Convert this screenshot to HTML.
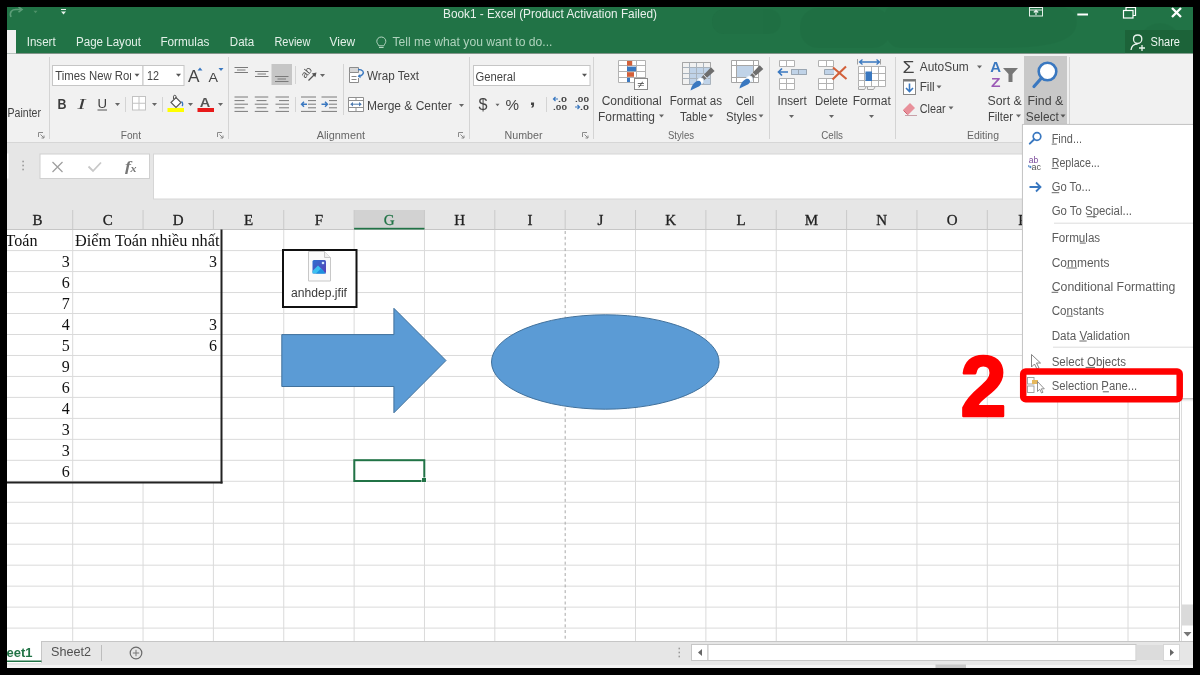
<!DOCTYPE html>
<html><head><meta charset="utf-8"><style>
html,body{margin:0;padding:0;background:#000;width:1200px;height:675px;overflow:hidden}
svg{display:block;will-change:transform}
text{white-space:pre}
</style></head><body>
<svg width="1200" height="675" viewBox="0 0 1200 675" shape-rendering="auto">
<rect x="0" y="0" width="1200" height="675" fill="#000" />
<rect x="7" y="7" width="1186" height="46.5" fill="#217346" />
<g fill="#0a3a1e" opacity="0.05"><rect x="712" y="9" width="69" height="25" rx="12"/><rect x="800" y="8" width="91" height="40" rx="18"/><path d="M890,7 L1060,7 C1075,7 1080,20 1075,30 C1068,44 1040,48 1000,48 L900,48 C880,48 880,7 890,7 Z"/><circle cx="1160" cy="45" r="22"/></g>
<rect x="7" y="30" width="9" height="23.5" fill="#f1f1f1" />
<rect x="1125" y="30" width="68" height="23.5" fill="#1c6339" />
<rect x="7" y="53.5" width="1186" height="88.5" fill="#f1f1f1" />
<rect x="7" y="142" width="1186" height="1" fill="#d6d6d6" />
<rect x="7" y="143" width="1186" height="86.5" fill="#e6e6e6" />
<rect x="7" y="229.5" width="1173" height="411.5" fill="#ffffff" />
<rect x="1180" y="229.5" width="13" height="411.5" fill="#ffffff" />
<rect x="7" y="641" width="1186" height="24" fill="#e6e6e6" />
<rect x="7" y="665" width="1186" height="3" fill="#f3f3f3" />
<path d="M11,17 C9,12 12,9 17,9.5 L21,9.5" fill="none" stroke="#5c9e78" stroke-width="1.6" />
<path d="M18.5,7 L22,9.6 L18.5,12.2" fill="none" stroke="#5c9e78" stroke-width="1.6" />
<path d="M33.5,10.75 L37.5,10.75 L35.5,13.25 Z" fill="#4f9169" stroke="none" stroke-width="1" />
<rect x="61" y="9" width="5" height="1" fill="#e8f2ec" />
<path d="M61,11.5 L66,11.5 L63.5,14.5 Z" fill="#e8f2ec" stroke="none" stroke-width="1" />
<text x="443" y="17.7" font-family="'Liberation Sans', sans-serif" font-size="12" fill="#e9f1ec" font-weight="normal" font-style="normal" text-anchor="start" textLength="214" lengthAdjust="spacingAndGlyphs" >Book1 - Excel (Product Activation Failed)</text>
<text x="26.7" y="45.8" font-family="'Liberation Sans', sans-serif" font-size="12" fill="#e3f0e8" font-weight="normal" font-style="normal" text-anchor="start" textLength="29" lengthAdjust="spacingAndGlyphs" >Insert</text>
<text x="76" y="45.8" font-family="'Liberation Sans', sans-serif" font-size="12" fill="#e3f0e8" font-weight="normal" font-style="normal" text-anchor="start" textLength="65" lengthAdjust="spacingAndGlyphs" >Page Layout</text>
<text x="160.4" y="45.8" font-family="'Liberation Sans', sans-serif" font-size="12" fill="#e3f0e8" font-weight="normal" font-style="normal" text-anchor="start" textLength="49" lengthAdjust="spacingAndGlyphs" >Formulas</text>
<text x="229.8" y="45.8" font-family="'Liberation Sans', sans-serif" font-size="12" fill="#e3f0e8" font-weight="normal" font-style="normal" text-anchor="start" textLength="24.4" lengthAdjust="spacingAndGlyphs" >Data</text>
<text x="274.4" y="45.8" font-family="'Liberation Sans', sans-serif" font-size="12" fill="#e3f0e8" font-weight="normal" font-style="normal" text-anchor="start" textLength="36" lengthAdjust="spacingAndGlyphs" >Review</text>
<text x="329.6" y="45.8" font-family="'Liberation Sans', sans-serif" font-size="12" fill="#e3f0e8" font-weight="normal" font-style="normal" text-anchor="start" textLength="25.6" lengthAdjust="spacingAndGlyphs" >View</text>
<path d="M381.3,37 C378.3,37 376.8,39.3 376.8,41.3 C376.8,43.3 378.3,44.3 378.8,45.8 L383.8,45.8 C384.3,44.3 385.8,43.3 385.8,41.3 C385.8,39.3 384.3,37 381.3,37 Z" fill="none" stroke="#b5d6c2" stroke-width="1" />
<line x1="379" y1="47.5" x2="383.6" y2="47.5" stroke="#b5d6c2" stroke-width="1" />
<text x="392.5" y="45.5" font-family="'Liberation Sans', sans-serif" font-size="12" fill="#afd3bd" font-weight="normal" font-style="normal" text-anchor="start" textLength="160" lengthAdjust="spacingAndGlyphs" >Tell me what you want to do...</text>
<rect x="1029.5" y="7.5" width="13.0" height="8.5" fill="none" stroke="#e6f0ea" stroke-width="1" />
<line x1="1029.5" y1="10" x2="1042.5" y2="10" stroke="#e6f0ea" stroke-width="1" />
<path d="M1036,15 L1036,10.5 M1033.8,12.5 L1036,10.3 L1038.2,12.5" fill="none" stroke="#e6f0ea" stroke-width="1.2" />
<rect x="1077.3" y="13.5" width="10.7" height="2.0" fill="#ffffff" />
<rect x="1123.5" y="10.5" width="9.5" height="7.5" fill="none" stroke="#ffffff" stroke-width="1.2" />
<path d="M1126,10.5 L1126,7.5 L1135.5,7.5 L1135.5,15.5 L1133,15.5" fill="none" stroke="#ffffff" stroke-width="1.2" />
<path d="M1172,8 L1181,17 M1181,8 L1172,17" fill="none" stroke="#ffffff" stroke-width="2.3" />
<path d="M1137.5,44 C1134,44 1131.5,46.5 1131,50 M1137.5,43.5 C1140.2,43.5 1141.8,41.3 1141.8,39 C1141.8,36.6 1140,35 1137.7,35 C1135.3,35 1133.5,36.6 1133.5,39 C1133.5,41.3 1135.2,43.5 1137.5,43.5 Z" fill="none" stroke="#e9f3ec" stroke-width="1.3" />
<path d="M1142,45 L1142,51 M1139,48 L1145,48" fill="none" stroke="#e9f3ec" stroke-width="1.3" />
<text x="1150.6" y="46" font-family="'Liberation Sans', sans-serif" font-size="12" fill="#eef6f1" font-weight="normal" font-style="normal" text-anchor="start" textLength="29.4" lengthAdjust="spacingAndGlyphs" >Share</text>
<line x1="49.5" y1="57" x2="49.5" y2="139" stroke="#d4d4d4" stroke-width="1" />
<line x1="228.5" y1="57" x2="228.5" y2="139" stroke="#d4d4d4" stroke-width="1" />
<line x1="469.5" y1="57" x2="469.5" y2="139" stroke="#d4d4d4" stroke-width="1" />
<line x1="593.5" y1="57" x2="593.5" y2="139" stroke="#d4d4d4" stroke-width="1" />
<line x1="769.5" y1="57" x2="769.5" y2="139" stroke="#d4d4d4" stroke-width="1" />
<line x1="895.5" y1="57" x2="895.5" y2="139" stroke="#d4d4d4" stroke-width="1" />
<line x1="1069.5" y1="57" x2="1069.5" y2="139" stroke="#d4d4d4" stroke-width="1" />
<text x="120.8" y="138.8" font-family="'Liberation Sans', sans-serif" font-size="11" fill="#666666" font-weight="normal" font-style="normal" text-anchor="start" textLength="20.2" lengthAdjust="spacingAndGlyphs" >Font</text>
<text x="316.7" y="138.8" font-family="'Liberation Sans', sans-serif" font-size="11" fill="#666666" font-weight="normal" font-style="normal" text-anchor="start" textLength="48.3" lengthAdjust="spacingAndGlyphs" >Alignment</text>
<text x="504.5" y="138.8" font-family="'Liberation Sans', sans-serif" font-size="11" fill="#666666" font-weight="normal" font-style="normal" text-anchor="start" textLength="38" lengthAdjust="spacingAndGlyphs" >Number</text>
<text x="668" y="138.8" font-family="'Liberation Sans', sans-serif" font-size="11" fill="#666666" font-weight="normal" font-style="normal" text-anchor="start" textLength="26" lengthAdjust="spacingAndGlyphs" >Styles</text>
<text x="821.3" y="138.8" font-family="'Liberation Sans', sans-serif" font-size="11" fill="#666666" font-weight="normal" font-style="normal" text-anchor="start" textLength="21.7" lengthAdjust="spacingAndGlyphs" >Cells</text>
<text x="967" y="138.8" font-family="'Liberation Sans', sans-serif" font-size="11" fill="#666666" font-weight="normal" font-style="normal" text-anchor="start" textLength="32" lengthAdjust="spacingAndGlyphs" >Editing</text>
<path d="M38.5,137.0 L38.5,132.5 L43.0,132.5" fill="none" stroke="#8a8a8a" stroke-width="1" />
<path d="M40.5,134.5 L44.0,138.0 M44.0,135.5 L44.0,138.0 L41.5,138.0" fill="none" stroke="#8a8a8a" stroke-width="1" />
<path d="M217.5,137.0 L217.5,132.5 L222.0,132.5" fill="none" stroke="#8a8a8a" stroke-width="1" />
<path d="M219.5,134.5 L223.0,138.0 M223.0,135.5 L223.0,138.0 L220.5,138.0" fill="none" stroke="#8a8a8a" stroke-width="1" />
<path d="M458.5,137.0 L458.5,132.5 L463.0,132.5" fill="none" stroke="#8a8a8a" stroke-width="1" />
<path d="M460.5,134.5 L464.0,138.0 M464.0,135.5 L464.0,138.0 L461.5,138.0" fill="none" stroke="#8a8a8a" stroke-width="1" />
<path d="M582.5,137.0 L582.5,132.5 L587.0,132.5" fill="none" stroke="#8a8a8a" stroke-width="1" />
<path d="M584.5,134.5 L588.0,138.0 M588.0,135.5 L588.0,138.0 L585.5,138.0" fill="none" stroke="#8a8a8a" stroke-width="1" />
<text x="7.5" y="116.7" font-family="'Liberation Sans', sans-serif" font-size="12" fill="#444444" font-weight="normal" font-style="normal" text-anchor="start" textLength="33.5" lengthAdjust="spacingAndGlyphs" >Painter</text>
<rect x="52.5" y="65.5" width="90.5" height="20.0" fill="#ffffff" stroke="#c6c6c6" stroke-width="1" />
<rect x="143" y="65.5" width="41" height="20.0" fill="#ffffff" stroke="#c6c6c6" stroke-width="1" />
<clipPath id="fn"><rect x="53" y="66" width="78" height="19"/></clipPath>
<text x="55.3" y="80.3" font-family="'Liberation Sans', sans-serif" font-size="12" fill="#444444" font-weight="normal" font-style="normal" text-anchor="start" textLength="83.5" lengthAdjust="spacingAndGlyphs" clip-path="url(#fn)">Times New Rom</text>
<path d="M134.5,73.8 L139.5,73.8 L137,76.8 Z" fill="#555" stroke="none" stroke-width="1" />
<text x="147" y="80.3" font-family="'Liberation Sans', sans-serif" font-size="12" fill="#444444" font-weight="normal" font-style="normal" text-anchor="start" textLength="12" lengthAdjust="spacingAndGlyphs" >12</text>
<path d="M176.0,73.8 L181.0,73.8 L178.5,76.8 Z" fill="#555" stroke="none" stroke-width="1" />
<text x="188" y="81.5" font-family="'Liberation Sans', sans-serif" font-size="16" fill="#444444" font-weight="normal" font-style="normal" text-anchor="start" textLength="11.5" lengthAdjust="spacingAndGlyphs" >A</text>
<path d="M197.5,70.5 L200,67.5 L202.5,70.5 Z" fill="#3a78c0" stroke="none" stroke-width="1" />
<text x="208.5" y="81.5" font-family="'Liberation Sans', sans-serif" font-size="13" fill="#444444" font-weight="normal" font-style="normal" text-anchor="start" textLength="9.5" lengthAdjust="spacingAndGlyphs" >A</text>
<path d="M218.5,68 L223.5,68 L221,71 Z" fill="#3a78c0" stroke="none" stroke-width="1" />
<text x="57.5" y="108.6" font-family="'Liberation Sans', sans-serif" font-size="14" fill="#3c3c3c" font-weight="bold" font-style="normal" text-anchor="start" textLength="9" lengthAdjust="spacingAndGlyphs" >B</text>
<text x="77.5" y="108.6" font-family="'Liberation Serif', serif" font-size="15" fill="#3c3c3c" font-weight="normal" font-style="italic" text-anchor="start" textLength="8" lengthAdjust="spacingAndGlyphs" >I</text>
<text x="97.5" y="107.6" font-family="'Liberation Sans', sans-serif" font-size="13" fill="#3c3c3c" font-weight="normal" font-style="normal" text-anchor="start" textLength="9.5" lengthAdjust="spacingAndGlyphs" >U</text>
<rect x="97.5" y="109.5" width="9.5" height="1.0" fill="#555" />
<path d="M115.0,103.0 L120.0,103.0 L117.5,106.0 Z" fill="#666" stroke="none" stroke-width="1" />
<line x1="125.5" y1="97" x2="125.5" y2="112" stroke="#d4d4d4" stroke-width="1" />
<g stroke="#c2c2c2" stroke-width="1" fill="#fff"><rect x="132.5" y="96.5" width="13" height="13.5"/><line x1="139" y1="96.5" x2="139" y2="110"/><line x1="132.5" y1="103.25" x2="145.5" y2="103.25"/></g>
<path d="M152.0,103.0 L157.0,103.0 L154.5,106.0 Z" fill="#666" stroke="none" stroke-width="1" />
<line x1="162.5" y1="97" x2="162.5" y2="112" stroke="#d4d4d4" stroke-width="1" />
<path d="M171,102.5 L176,97.5 L181,102.5 L176,107.5 Z" fill="#fff" stroke="#555" stroke-width="1.1" />
<path d="M173.5,99 L173.5,96.2 C173.5,95 176,95 176,96.2 L176,99" fill="none" stroke="#555" stroke-width="1" />
<path d="M181.5,101.5 C183,103 183,105 182,106" fill="none" stroke="#3a78c0" stroke-width="1.3" />
<rect x="167.5" y="108" width="16.5" height="4" fill="#ffff00" />
<path d="M188.0,103.0 L193.0,103.0 L190.5,106.0 Z" fill="#666" stroke="none" stroke-width="1" />
<text x="199.8" y="107" font-family="'Liberation Sans', sans-serif" font-size="13.5" fill="#555" font-weight="bold" font-style="normal" text-anchor="start" textLength="10.5" lengthAdjust="spacingAndGlyphs" >A</text>
<rect x="197.5" y="108" width="16.5" height="4" fill="#e81a1a" />
<path d="M218.0,103.0 L223.0,103.0 L220.5,106.0 Z" fill="#666" stroke="none" stroke-width="1" />
<line x1="234.5" y1="67.5" x2="248" y2="67.5" stroke="#7a7a7a" stroke-width="1" />
<line x1="237" y1="70" x2="245.5" y2="70" stroke="#7a7a7a" stroke-width="1" />
<line x1="234.5" y1="72.5" x2="248" y2="72.5" stroke="#7a7a7a" stroke-width="1" />
<line x1="255" y1="71.5" x2="268.5" y2="71.5" stroke="#7a7a7a" stroke-width="1" />
<line x1="257.5" y1="74" x2="266" y2="74" stroke="#7a7a7a" stroke-width="1" />
<line x1="255" y1="76.5" x2="268.5" y2="76.5" stroke="#7a7a7a" stroke-width="1" />
<rect x="271.5" y="64" width="20.5" height="21" fill="#c6c6c6" />
<line x1="275" y1="76.5" x2="288.5" y2="76.5" stroke="#7a7a7a" stroke-width="1" />
<line x1="277.5" y1="79" x2="286" y2="79" stroke="#7a7a7a" stroke-width="1" />
<line x1="275" y1="81.5" x2="288.5" y2="81.5" stroke="#7a7a7a" stroke-width="1" />
<line x1="295.5" y1="66" x2="295.5" y2="84" stroke="#d4d4d4" stroke-width="1" />
<text x="306.3" y="75.8" font-family="'Liberation Sans', sans-serif" font-size="10" fill="#4a4a4a" font-weight="normal" font-style="normal" text-anchor="middle" transform="rotate(-50 306.3 72.4)">ab</text>
<path d="M308.5,80.5 L314.5,74.5" fill="none" stroke="#555" stroke-width="1.2" />
<path d="M316.5,72.5 L311.8,73.6 L315.4,77.2 Z" fill="#555" stroke="none" stroke-width="1" />
<path d="M320.0,74.0 L325.0,74.0 L322.5,77.0 Z" fill="#666" stroke="none" stroke-width="1" />
<line x1="343.5" y1="64" x2="343.5" y2="115" stroke="#d4d4d4" stroke-width="1" />
<rect x="349.5" y="67.5" width="9.0" height="5.0" fill="#d6d6d6" />
<path d="M349.5,67.5 H358.5 V72.5 H349.5 Z M349.5,72.5 V82.5 H358.5 V78" fill="none" stroke="#8c8c8c" stroke-width="1"/>
<rect x="350" y="73" width="8" height="9" fill="#fff" />
<line x1="351.5" y1="76.5" x2="356.5" y2="76.5" stroke="#888" stroke-width="1" />
<line x1="351.5" y1="79.5" x2="356.5" y2="79.5" stroke="#888" stroke-width="1" />
<path d="M358,69.5 C363,69.5 364.5,72 362.5,74.5 C361.5,75.8 360,76.3 358.5,76.3" fill="none" stroke="#3a78c0" stroke-width="1.4" />
<path d="M360.2,74 L357.6,76.3 L360.6,78.2 Z" fill="#3a78c0" stroke="none" stroke-width="1" />
<text x="367" y="79.6" font-family="'Liberation Sans', sans-serif" font-size="12" fill="#444444" font-weight="normal" font-style="normal" text-anchor="start" textLength="52" lengthAdjust="spacingAndGlyphs" >Wrap Text</text>
<line x1="234.5" y1="97.0" x2="248.0" y2="97.0" stroke="#7a7a7a" stroke-width="1" />
<line x1="254.75" y1="97.0" x2="268.25" y2="97.0" stroke="#7a7a7a" stroke-width="1" />
<line x1="275.5" y1="97.0" x2="289" y2="97.0" stroke="#7a7a7a" stroke-width="1" />
<line x1="234.5" y1="100.6" x2="244.5" y2="100.6" stroke="#7a7a7a" stroke-width="1" />
<line x1="256.5" y1="100.6" x2="266.5" y2="100.6" stroke="#7a7a7a" stroke-width="1" />
<line x1="279" y1="100.6" x2="289" y2="100.6" stroke="#7a7a7a" stroke-width="1" />
<line x1="234.5" y1="104.2" x2="248.0" y2="104.2" stroke="#7a7a7a" stroke-width="1" />
<line x1="254.75" y1="104.2" x2="268.25" y2="104.2" stroke="#7a7a7a" stroke-width="1" />
<line x1="275.5" y1="104.2" x2="289" y2="104.2" stroke="#7a7a7a" stroke-width="1" />
<line x1="234.5" y1="107.8" x2="244.5" y2="107.8" stroke="#7a7a7a" stroke-width="1" />
<line x1="256.5" y1="107.8" x2="266.5" y2="107.8" stroke="#7a7a7a" stroke-width="1" />
<line x1="279" y1="107.8" x2="289" y2="107.8" stroke="#7a7a7a" stroke-width="1" />
<line x1="234.5" y1="111.4" x2="248.0" y2="111.4" stroke="#7a7a7a" stroke-width="1" />
<line x1="254.75" y1="111.4" x2="268.25" y2="111.4" stroke="#7a7a7a" stroke-width="1" />
<line x1="275.5" y1="111.4" x2="289" y2="111.4" stroke="#7a7a7a" stroke-width="1" />
<line x1="295.5" y1="97" x2="295.5" y2="112" stroke="#d4d4d4" stroke-width="1" />
<line x1="301" y1="97.0" x2="316" y2="97.0" stroke="#7a7a7a" stroke-width="1" />
<line x1="321.5" y1="97.0" x2="337" y2="97.0" stroke="#7a7a7a" stroke-width="1" />
<line x1="308" y1="100.6" x2="316" y2="100.6" stroke="#7a7a7a" stroke-width="1" />
<line x1="329" y1="100.6" x2="337" y2="100.6" stroke="#7a7a7a" stroke-width="1" />
<line x1="308" y1="104.2" x2="316" y2="104.2" stroke="#7a7a7a" stroke-width="1" />
<line x1="329" y1="104.2" x2="337" y2="104.2" stroke="#7a7a7a" stroke-width="1" />
<line x1="308" y1="107.8" x2="316" y2="107.8" stroke="#7a7a7a" stroke-width="1" />
<line x1="329" y1="107.8" x2="337" y2="107.8" stroke="#7a7a7a" stroke-width="1" />
<line x1="301" y1="111.4" x2="316" y2="111.4" stroke="#7a7a7a" stroke-width="1" />
<line x1="321.5" y1="111.4" x2="337" y2="111.4" stroke="#7a7a7a" stroke-width="1" />
<path d="M307,104.2 L301.5,104.2 M304,101.7 L301.5,104.2 L304,106.7" fill="none" stroke="#3a78c0" stroke-width="1.4" />
<path d="M321.5,104.2 L327.5,104.2 M325,101.7 L327.5,104.2 L325,106.7" fill="none" stroke="#3a78c0" stroke-width="1.4" />
<rect x="348.5" y="97.5" width="15.0" height="14.0" fill="#fff" />
<path d="M348.5,97.5 H363.5 V111.5 H348.5 Z M348.5,100.5 H363.5 M348.5,107.5 H363.5 M356,97.5 V100.5 M356,107.5 V111.5" fill="none" stroke="#909090" stroke-width="1"/>
<path d="M351.5,104.2 L360.5,104.2" fill="none" stroke="#5b86b5" stroke-width="1.1" />
<path d="M350.2,104.2 L353,102 L353,106.4 Z M361.8,104.2 L359,102 L359,106.4 Z" fill="#4f7bb0" stroke="none" stroke-width="1" />
<text x="367" y="109.6" font-family="'Liberation Sans', sans-serif" font-size="12" fill="#444444" font-weight="normal" font-style="normal" text-anchor="start" textLength="84.7" lengthAdjust="spacingAndGlyphs" >Merge &amp; Center</text>
<path d="M459.0,104.0 L464.0,104.0 L461.5,107.0 Z" fill="#666" stroke="none" stroke-width="1" />
<rect x="473.5" y="65.5" width="116.5" height="20.0" fill="#ffffff" stroke="#c6c6c6" stroke-width="1" />
<text x="475.5" y="80.5" font-family="'Liberation Sans', sans-serif" font-size="12" fill="#444444" font-weight="normal" font-style="normal" text-anchor="start" textLength="40" lengthAdjust="spacingAndGlyphs" >General</text>
<path d="M582.0,73.8 L587.0,73.8 L584.5,76.8 Z" fill="#555" stroke="none" stroke-width="1" />
<text x="478.5" y="110" font-family="'Liberation Sans', sans-serif" font-size="17" fill="#444" font-weight="normal" font-style="normal" text-anchor="start" textLength="9" lengthAdjust="spacingAndGlyphs" >$</text>
<path d="M495.5,103.75 L499.5,103.75 L497.5,106.25 Z" fill="#666" stroke="none" stroke-width="1" />
<text x="505.5" y="109.5" font-family="'Liberation Sans', sans-serif" font-size="15" fill="#444" font-weight="normal" font-style="normal" text-anchor="start" textLength="13.5" lengthAdjust="spacingAndGlyphs" >%</text>
<text x="529.5" y="104.5" font-family="'Liberation Sans', sans-serif" font-size="16" fill="#444" font-weight="bold" font-style="normal" text-anchor="start" textLength="6" lengthAdjust="spacingAndGlyphs" >,</text>
<line x1="546.5" y1="97" x2="546.5" y2="112" stroke="#d4d4d4" stroke-width="1" />
<text x="558" y="102" font-family="'Liberation Sans', sans-serif" font-size="8" fill="#444" font-weight="bold" font-style="normal" text-anchor="start" textLength="9" lengthAdjust="spacingAndGlyphs" >.0</text>
<text x="553" y="110" font-family="'Liberation Sans', sans-serif" font-size="8" fill="#444" font-weight="bold" font-style="normal" text-anchor="start" textLength="14" lengthAdjust="spacingAndGlyphs" >.00</text>
<path d="M558,99 L553.5,99 M555.5,97 L553.5,99 L555.5,101" fill="none" stroke="#3a78c0" stroke-width="1.2" />
<text x="575" y="102" font-family="'Liberation Sans', sans-serif" font-size="8" fill="#444" font-weight="bold" font-style="normal" text-anchor="start" textLength="14" lengthAdjust="spacingAndGlyphs" >.00</text>
<text x="580" y="110" font-family="'Liberation Sans', sans-serif" font-size="8" fill="#444" font-weight="bold" font-style="normal" text-anchor="start" textLength="9" lengthAdjust="spacingAndGlyphs" >.0</text>
<path d="M575,107 L579.5,107 M577.5,105 L579.5,107 L577.5,109" fill="none" stroke="#3a78c0" stroke-width="1.2" />
<path d="M618.5,60.5 H645.5 V82.5 H618.5 Z M627.5,60.5 V82.5 M636.5,60.5 V82.5 M618.5,65.5 H645.5 M618.5,71.5 H645.5 M618.5,77.5 H645.5" fill="#fff" stroke="#b2b2b2" stroke-width="1" />
<rect x="627" y="61" width="5.2" height="4.6" fill="#d2603a" />
<rect x="627" y="66.6" width="9" height="4.6" fill="#3a78c0" />
<rect x="627" y="72.2" width="7" height="4.6" fill="#d2603a" />
<rect x="627" y="77.8" width="3" height="4.2" fill="#3a78c0" />
<rect x="634.5" y="78.5" width="13.0" height="11.0" fill="#fff" stroke="#8a8a8a" stroke-width="1" />
<text x="641" y="87.8" font-family="'Liberation Sans', sans-serif" font-size="10" fill="#444" font-weight="normal" font-style="normal" text-anchor="middle" textLength="7" lengthAdjust="spacingAndGlyphs" >≠</text>
<text x="601.7" y="104.7" font-family="'Liberation Sans', sans-serif" font-size="12" fill="#444444" font-weight="normal" font-style="normal" text-anchor="start" textLength="60" lengthAdjust="spacingAndGlyphs" >Conditional</text>
<text x="598" y="121" font-family="'Liberation Sans', sans-serif" font-size="12" fill="#444444" font-weight="normal" font-style="normal" text-anchor="start" textLength="57" lengthAdjust="spacingAndGlyphs" >Formatting</text>
<path d="M659.0,114.5 L664.0,114.5 L661.5,117.5 Z" fill="#666" stroke="none" stroke-width="1" />
<rect x="689.6" y="67.6" width="20.5" height="16.9" fill="#c0d3e8" />
<path d="M682.5,62.5 H710.5 V84.5 H682.5 Z M682.5,62.5 M689.5,62.5 V84.5 M696.5,62.5 V84.5 M703.5,62.5 V84.5 M682.5,67.5 H710.5 M682.5,73.5 H710.5 M682.5,78.5 H710.5" fill="none" stroke="#a9b3bd" stroke-width="1"/>
<path d="M682.5,62.5 H710.5 V67.5 M682.5,62.5 V84.5 H689.5" fill="none" stroke="#a6a6a6" stroke-width="1"/>
<path d="M700.71,77.98 L711.00,67.32 L714.60,71.08 L703.48,80.87 Z" fill="#6e6e6e" stroke="none" stroke-width="1" />
<line x1="703.15" y1="74.27" x2="707.29" y2="78.61" stroke="#f1f1f1" stroke-width="1" />
<circle cx="700.53" cy="80.92" r="3.2" fill="#fff" stroke="#cfe0f0" stroke-width="0.8"/>
<path d="M690.5,90.5 C691.43,84.77 696.04,80.23 699.18,80.83 C701.92,82.36 701.77,84.44 699.26,86.28 Z" fill="#3a78c0" stroke="none" stroke-width="1" />
<text x="669.7" y="104.7" font-family="'Liberation Sans', sans-serif" font-size="12" fill="#444444" font-weight="normal" font-style="normal" text-anchor="start" textLength="52.3" lengthAdjust="spacingAndGlyphs" >Format as</text>
<text x="680" y="121" font-family="'Liberation Sans', sans-serif" font-size="12" fill="#444444" font-weight="normal" font-style="normal" text-anchor="start" textLength="27" lengthAdjust="spacingAndGlyphs" >Table</text>
<path d="M708.5,114.5 L713.5,114.5 L711,117.5 Z" fill="#666" stroke="none" stroke-width="1" />
<rect x="731.5" y="60.5" width="27.5" height="22.0" fill="#ffffff" />
<rect x="736.4" y="65" width="17.2" height="12.8" fill="#c0d3e8" />
<path d="M731.5,60.5 H758.5 V82.5 H731.5 Z M736.5,60.5 V82.5 M753.5,60.5 V82.5 M731.5,65.5 H758.5 M731.5,77.5 H758.5" fill="none" stroke="#a6a6a6" stroke-width="1"/>
<path d="M749.55,75.99 L759.69,65.33 L763.31,69.07 L752.33,78.86 Z" fill="#6e6e6e" stroke="none" stroke-width="1" />
<line x1="751.93" y1="72.29" x2="756.11" y2="76.6" stroke="#f1f1f1" stroke-width="1" />
<circle cx="749.40" cy="78.92" r="3.2" fill="#fff" stroke="#cfe0f0" stroke-width="0.8"/>
<path d="M739.5,88.5 C740.37,82.79 744.92,78.25 748.04,78.84 C750.79,80.35 750.66,82.42 748.19,84.27 Z" fill="#3a78c0" stroke="none" stroke-width="1" />
<text x="736" y="104.7" font-family="'Liberation Sans', sans-serif" font-size="12" fill="#444444" font-weight="normal" font-style="normal" text-anchor="start" textLength="18" lengthAdjust="spacingAndGlyphs" >Cell</text>
<text x="726" y="121" font-family="'Liberation Sans', sans-serif" font-size="12" fill="#444444" font-weight="normal" font-style="normal" text-anchor="start" textLength="31" lengthAdjust="spacingAndGlyphs" >Styles</text>
<path d="M758.5,114.5 L763.5,114.5 L761,117.5 Z" fill="#666" stroke="none" stroke-width="1" />
<path d="M779.5,60.5 H794.5 V66.5 H779.5 Z M786.5,60.5 V66.5" fill="#fff" stroke="#b2b2b2" stroke-width="1" />
<path d="M779.5,78.5 H794.5 V89.5 H779.5 Z M786.5,78.5 V89.5 M779.5,83.5 H794.5" fill="#fff" stroke="#b2b2b2" stroke-width="1" />
<path d="M791.5,69.5 H806.5 V74.5 H791.5 Z M798.5,69.5 V74.5" fill="#fff" stroke="#9aa6b2" stroke-width="1" />
<rect x="791.5" y="69.5" width="14.9" height="5.0" fill="#c0d3e8" />
<path d="M791.5,69.5 H806.5 V74.5 H791.5 Z M798.5,69.5 V74.5" fill="none" stroke="#9aa6b2" stroke-width="1"/>
<path d="M788,72 L778.5,72 M782,68.5 L778.5,72 L782,75.5" fill="none" stroke="#3a78c0" stroke-width="1.7" />
<text x="777.5" y="104.7" font-family="'Liberation Sans', sans-serif" font-size="12" fill="#444444" font-weight="normal" font-style="normal" text-anchor="start" textLength="29.2" lengthAdjust="spacingAndGlyphs" >Insert</text>
<path d="M789.0,115.0 L794.0,115.0 L791.5,118.0 Z" fill="#666" stroke="none" stroke-width="1" />
<path d="M818.5,60.5 H833.5 V66.5 H818.5 Z M826.5,60.5 V66.5" fill="#fff" stroke="#b2b2b2" stroke-width="1" />
<path d="M818.5,78.5 H833.5 V89.5 H818.5 Z M826.5,78.5 V89.5 M818.5,83.5 H833.5" fill="#fff" stroke="#b2b2b2" stroke-width="1" />
<rect x="824.5" y="69.5" width="9.5" height="5.0" fill="#c0d3e8" />
<path d="M834,69.5 H824.5 V74.5 H834" fill="none" stroke="#9aa6b2" stroke-width="1"/>
<path d="M833,67.5 L846.5,79 M846,66.5 L832.5,79.5" fill="none" stroke="#d2603a" stroke-width="2.1" />
<text x="815" y="104.7" font-family="'Liberation Sans', sans-serif" font-size="12" fill="#444444" font-weight="normal" font-style="normal" text-anchor="start" textLength="32.8" lengthAdjust="spacingAndGlyphs" >Delete</text>
<path d="M829.0,115.0 L834.0,115.0 L831.5,118.0 Z" fill="#666" stroke="none" stroke-width="1" />
<path d="M858.5,66.5 H885.5 V86.5 H858.5 Z M864.5,66.5 V86.5 M871.5,66.5 V86.5 M878.5,66.5 V86.5 M858.5,73.5 H885.5 M858.5,80.5 H885.5" fill="#fff" stroke="#b2b2b2" stroke-width="1" />
<rect x="865.5" y="71.5" width="6.5" height="9.5" fill="#3a78c0" />
<path d="M858.5,87 V89.5 H864.5 L866,87 M867.5,87 V89.5 H873.5 L875,87" fill="none" stroke="#a6a6a6" stroke-width="1" />
<path d="M859.5,62 L879.5,62 M862.5,59.5 L859.5,62 L862.5,64.5 M876.5,59.5 L879.5,62 L876.5,64.5" fill="none" stroke="#3a78c0" stroke-width="1.3" />
<line x1="857.5" y1="59" x2="857.5" y2="64.5" stroke="#a0a0a0" stroke-width="1" />
<line x1="880.5" y1="59" x2="880.5" y2="64.5" stroke="#a0a0a0" stroke-width="1" />
<text x="852.8" y="104.7" font-family="'Liberation Sans', sans-serif" font-size="12" fill="#444444" font-weight="normal" font-style="normal" text-anchor="start" textLength="38" lengthAdjust="spacingAndGlyphs" >Format</text>
<path d="M869.0,115.0 L874.0,115.0 L871.5,118.0 Z" fill="#666" stroke="none" stroke-width="1" />
<text x="902.5" y="72.5" font-family="'Liberation Sans', sans-serif" font-size="17" fill="#444" font-weight="normal" font-style="normal" text-anchor="start" textLength="12" lengthAdjust="spacingAndGlyphs" >Σ</text>
<text x="919.7" y="71.3" font-family="'Liberation Sans', sans-serif" font-size="12" fill="#444444" font-weight="normal" font-style="normal" text-anchor="start" textLength="49" lengthAdjust="spacingAndGlyphs" >AutoSum</text>
<path d="M977.0,65.5 L982.0,65.5 L979.5,68.5 Z" fill="#666" stroke="none" stroke-width="1" />
<rect x="903.5" y="79.5" width="12.0" height="15.0" fill="#fff" stroke="#888" stroke-width="1" />
<rect x="903.5" y="79.5" width="12.0" height="2.0" fill="#777" />
<path d="M909.5,83.5 L909.5,91.5 M906,88 L909.5,91.5 L913,88" fill="none" stroke="#3a78c0" stroke-width="1.6" />
<text x="919.7" y="91.3" font-family="'Liberation Sans', sans-serif" font-size="12" fill="#444444" font-weight="normal" font-style="normal" text-anchor="start" textLength="15" lengthAdjust="spacingAndGlyphs" >Fill</text>
<path d="M936.5,85.5 L941.5,85.5 L939,88.5 Z" fill="#666" stroke="none" stroke-width="1" />
<path d="M903,110 L910,103 L915,108 L908,115 Z" fill="#e8909a" stroke="none" stroke-width="1" />
<path d="M903.5,110.5 L907.5,114.5" fill="none" stroke="#d06070" stroke-width="1" />
<line x1="905" y1="115.5" x2="917" y2="115.5" stroke="#c8a0a8" stroke-width="1" />
<text x="919.7" y="112.5" font-family="'Liberation Sans', sans-serif" font-size="12" fill="#444444" font-weight="normal" font-style="normal" text-anchor="start" textLength="26" lengthAdjust="spacingAndGlyphs" >Clear</text>
<path d="M948.5,106.5 L953.5,106.5 L951,109.5 Z" fill="#666" stroke="none" stroke-width="1" />
<text x="990.3" y="72.2" font-family="'Liberation Sans', sans-serif" font-size="14" fill="#3a78c0" font-weight="bold" font-style="normal" text-anchor="start" textLength="10.8" lengthAdjust="spacingAndGlyphs" >A</text>
<text x="991" y="86.5" font-family="'Liberation Sans', sans-serif" font-size="13.5" fill="#9b59b6" font-weight="bold" font-style="normal" text-anchor="start" textLength="9.5" lengthAdjust="spacingAndGlyphs" >Z</text>
<path d="M1003,68 L1018,68 L1012.5,74 L1012.5,82 L1008.5,82 L1008.5,74 Z" fill="#777" stroke="none" stroke-width="1" />
<text x="987.5" y="104.5" font-family="'Liberation Sans', sans-serif" font-size="12" fill="#444444" font-weight="normal" font-style="normal" text-anchor="start" textLength="34.2" lengthAdjust="spacingAndGlyphs" >Sort &amp;</text>
<text x="988" y="121" font-family="'Liberation Sans', sans-serif" font-size="12" fill="#444444" font-weight="normal" font-style="normal" text-anchor="start" textLength="25" lengthAdjust="spacingAndGlyphs" >Filter</text>
<path d="M1016.0,114.5 L1021.0,114.5 L1018.5,117.5 Z" fill="#666" stroke="none" stroke-width="1" />
<rect x="1024" y="56" width="43" height="68.5" fill="#c8c8c8" />
<circle cx="1047.5" cy="71.5" r="8.8" fill="#fff" stroke="#3a78c0" stroke-width="2.6"/>
<path d="M1041.5,78 L1034,86.5" fill="none" stroke="#3a78c0" stroke-width="3.2" stroke-linecap="round"/>
<text x="1027.5" y="104.5" font-family="'Liberation Sans', sans-serif" font-size="12" fill="#444444" font-weight="normal" font-style="normal" text-anchor="start" textLength="35.8" lengthAdjust="spacingAndGlyphs" >Find &amp;</text>
<text x="1025.8" y="121" font-family="'Liberation Sans', sans-serif" font-size="12" fill="#444444" font-weight="normal" font-style="normal" text-anchor="start" textLength="33" lengthAdjust="spacingAndGlyphs" >Select</text>
<path d="M1060.5,114.5 L1065.5,114.5 L1063,117.5 Z" fill="#555" stroke="none" stroke-width="1" />
<rect x="7" y="153.5" width="1.5" height="25.0" fill="#fff" />
<rect x="22.3" y="160.7" width="1.6" height="1.6" fill="#9a9a9a" />
<rect x="22.3" y="164.7" width="1.6" height="1.6" fill="#9a9a9a" />
<rect x="22.3" y="168.7" width="1.6" height="1.6" fill="#9a9a9a" />
<rect x="40" y="154" width="109.5" height="24.5" fill="#fff" stroke="#d0d0d0" stroke-width="1" />
<path d="M52.5,162 L62.5,172 M62.5,162 L52.5,172" fill="none" stroke="#a0a0a0" stroke-width="1.3" />
<path d="M88.5,166.5 L93,171 L101,162.5" fill="none" stroke="#c8c8c8" stroke-width="1.8" />
<text x="125" y="171" font-family="'Liberation Serif', serif" font-size="14" fill="#777" font-weight="bold" font-style="italic" text-anchor="start" textLength="6" lengthAdjust="spacingAndGlyphs" >f</text>
<text x="130.5" y="171.5" font-family="'Liberation Serif', serif" font-size="11" fill="#777" font-weight="bold" font-style="italic" text-anchor="start" textLength="6" lengthAdjust="spacingAndGlyphs" >x</text>
<rect x="153.5" y="154" width="1046.5" height="45" fill="#fff" stroke="#d6d6d6" stroke-width="1" />
<rect x="354.11" y="210" width="70.36" height="19.5" fill="#d2d2d2" />
<line x1="72.69" y1="210" x2="72.69" y2="229" stroke="#c9c9c9" stroke-width="1" />
<line x1="143.04500000000002" y1="210" x2="143.04500000000002" y2="229" stroke="#c9c9c9" stroke-width="1" />
<line x1="213.4" y1="210" x2="213.4" y2="229" stroke="#c9c9c9" stroke-width="1" />
<line x1="283.755" y1="210" x2="283.755" y2="229" stroke="#c9c9c9" stroke-width="1" />
<line x1="354.11" y1="210" x2="354.11" y2="229" stroke="#c9c9c9" stroke-width="1" />
<line x1="424.46500000000003" y1="210" x2="424.46500000000003" y2="229" stroke="#c9c9c9" stroke-width="1" />
<line x1="494.82" y1="210" x2="494.82" y2="229" stroke="#c9c9c9" stroke-width="1" />
<line x1="565.175" y1="210" x2="565.175" y2="229" stroke="#c9c9c9" stroke-width="1" />
<line x1="635.53" y1="210" x2="635.53" y2="229" stroke="#c9c9c9" stroke-width="1" />
<line x1="705.885" y1="210" x2="705.885" y2="229" stroke="#c9c9c9" stroke-width="1" />
<line x1="776.24" y1="210" x2="776.24" y2="229" stroke="#c9c9c9" stroke-width="1" />
<line x1="846.595" y1="210" x2="846.595" y2="229" stroke="#c9c9c9" stroke-width="1" />
<line x1="916.95" y1="210" x2="916.95" y2="229" stroke="#c9c9c9" stroke-width="1" />
<line x1="987.3050000000001" y1="210" x2="987.3050000000001" y2="229" stroke="#c9c9c9" stroke-width="1" />
<line x1="1057.66" y1="210" x2="1057.66" y2="229" stroke="#c9c9c9" stroke-width="1" />
<line x1="1128.015" y1="210" x2="1128.015" y2="229" stroke="#c9c9c9" stroke-width="1" />
<text x="37.512499999999996" y="225.3" font-family="'Liberation Serif', serif" font-size="15" fill="#222" font-weight="normal" font-style="normal" text-anchor="middle" stroke="#222" stroke-width="0.3">B</text>
<text x="107.8675" y="225.3" font-family="'Liberation Serif', serif" font-size="15" fill="#222" font-weight="normal" font-style="normal" text-anchor="middle" stroke="#222" stroke-width="0.3">C</text>
<text x="178.22250000000003" y="225.3" font-family="'Liberation Serif', serif" font-size="15" fill="#222" font-weight="normal" font-style="normal" text-anchor="middle" stroke="#222" stroke-width="0.3">D</text>
<text x="248.57750000000001" y="225.3" font-family="'Liberation Serif', serif" font-size="15" fill="#222" font-weight="normal" font-style="normal" text-anchor="middle" stroke="#222" stroke-width="0.3">E</text>
<text x="318.9325" y="225.3" font-family="'Liberation Serif', serif" font-size="15" fill="#222" font-weight="normal" font-style="normal" text-anchor="middle" stroke="#222" stroke-width="0.3">F</text>
<text x="389.2875" y="225.3" font-family="'Liberation Serif', serif" font-size="15" fill="#217346" font-weight="normal" font-style="normal" text-anchor="middle" stroke="#217346" stroke-width="0.3">G</text>
<text x="459.64250000000004" y="225.3" font-family="'Liberation Serif', serif" font-size="15" fill="#222" font-weight="normal" font-style="normal" text-anchor="middle" stroke="#222" stroke-width="0.3">H</text>
<text x="529.9975" y="225.3" font-family="'Liberation Serif', serif" font-size="15" fill="#222" font-weight="normal" font-style="normal" text-anchor="middle" stroke="#222" stroke-width="0.3">I</text>
<text x="600.3525" y="225.3" font-family="'Liberation Serif', serif" font-size="15" fill="#222" font-weight="normal" font-style="normal" text-anchor="middle" stroke="#222" stroke-width="0.3">J</text>
<text x="670.7075" y="225.3" font-family="'Liberation Serif', serif" font-size="15" fill="#222" font-weight="normal" font-style="normal" text-anchor="middle" stroke="#222" stroke-width="0.3">K</text>
<text x="741.0625" y="225.3" font-family="'Liberation Serif', serif" font-size="15" fill="#222" font-weight="normal" font-style="normal" text-anchor="middle" stroke="#222" stroke-width="0.3">L</text>
<text x="811.4175" y="225.3" font-family="'Liberation Serif', serif" font-size="15" fill="#222" font-weight="normal" font-style="normal" text-anchor="middle" stroke="#222" stroke-width="0.3">M</text>
<text x="881.7725" y="225.3" font-family="'Liberation Serif', serif" font-size="15" fill="#222" font-weight="normal" font-style="normal" text-anchor="middle" stroke="#222" stroke-width="0.3">N</text>
<text x="952.1275" y="225.3" font-family="'Liberation Serif', serif" font-size="15" fill="#222" font-weight="normal" font-style="normal" text-anchor="middle" stroke="#222" stroke-width="0.3">O</text>
<text x="1022.4825000000001" y="225.3" font-family="'Liberation Serif', serif" font-size="15" fill="#222" font-weight="normal" font-style="normal" text-anchor="middle" stroke="#222" stroke-width="0.3">P</text>
<rect x="7" y="229" width="1173" height="1" fill="#c6c6c6" />
<rect x="354.11" y="227.8" width="70.36" height="1.7" fill="#217346" />
<line x1="7" y1="250.602" x2="1180" y2="250.602" stroke="#dadada" stroke-width="1" />
<line x1="7" y1="271.574" x2="1180" y2="271.574" stroke="#dadada" stroke-width="1" />
<line x1="7" y1="292.546" x2="1180" y2="292.546" stroke="#dadada" stroke-width="1" />
<line x1="7" y1="313.51800000000003" x2="1180" y2="313.51800000000003" stroke="#dadada" stroke-width="1" />
<line x1="7" y1="334.49" x2="1180" y2="334.49" stroke="#dadada" stroke-width="1" />
<line x1="7" y1="355.462" x2="1180" y2="355.462" stroke="#dadada" stroke-width="1" />
<line x1="7" y1="376.43399999999997" x2="1180" y2="376.43399999999997" stroke="#dadada" stroke-width="1" />
<line x1="7" y1="397.406" x2="1180" y2="397.406" stroke="#dadada" stroke-width="1" />
<line x1="7" y1="418.37800000000004" x2="1180" y2="418.37800000000004" stroke="#dadada" stroke-width="1" />
<line x1="7" y1="439.35" x2="1180" y2="439.35" stroke="#dadada" stroke-width="1" />
<line x1="7" y1="460.322" x2="1180" y2="460.322" stroke="#dadada" stroke-width="1" />
<line x1="7" y1="481.294" x2="1180" y2="481.294" stroke="#dadada" stroke-width="1" />
<line x1="7" y1="502.266" x2="1180" y2="502.266" stroke="#dadada" stroke-width="1" />
<line x1="7" y1="523.238" x2="1180" y2="523.238" stroke="#dadada" stroke-width="1" />
<line x1="7" y1="544.21" x2="1180" y2="544.21" stroke="#dadada" stroke-width="1" />
<line x1="7" y1="565.182" x2="1180" y2="565.182" stroke="#dadada" stroke-width="1" />
<line x1="7" y1="586.154" x2="1180" y2="586.154" stroke="#dadada" stroke-width="1" />
<line x1="7" y1="607.126" x2="1180" y2="607.126" stroke="#dadada" stroke-width="1" />
<line x1="7" y1="628.098" x2="1180" y2="628.098" stroke="#dadada" stroke-width="1" />
<line x1="72.69" y1="230" x2="72.69" y2="641" stroke="#dadada" stroke-width="1" />
<line x1="143.04500000000002" y1="482.5" x2="143.04500000000002" y2="641" stroke="#dadada" stroke-width="1" />
<line x1="213.4" y1="482.5" x2="213.4" y2="641" stroke="#dadada" stroke-width="1" />
<line x1="283.755" y1="230" x2="283.755" y2="641" stroke="#dadada" stroke-width="1" />
<line x1="354.11" y1="230" x2="354.11" y2="641" stroke="#dadada" stroke-width="1" />
<line x1="424.46500000000003" y1="230" x2="424.46500000000003" y2="641" stroke="#dadada" stroke-width="1" />
<line x1="494.82" y1="230" x2="494.82" y2="641" stroke="#dadada" stroke-width="1" />
<line x1="565.175" y1="231" x2="565.175" y2="641" stroke="#a8a8a8" stroke-width="1" stroke-dasharray="3,2.7"/>
<line x1="635.53" y1="230" x2="635.53" y2="641" stroke="#dadada" stroke-width="1" />
<line x1="705.885" y1="230" x2="705.885" y2="641" stroke="#dadada" stroke-width="1" />
<line x1="776.24" y1="230" x2="776.24" y2="641" stroke="#dadada" stroke-width="1" />
<line x1="846.595" y1="230" x2="846.595" y2="641" stroke="#dadada" stroke-width="1" />
<line x1="916.95" y1="230" x2="916.95" y2="641" stroke="#dadada" stroke-width="1" />
<line x1="987.3050000000001" y1="230" x2="987.3050000000001" y2="641" stroke="#dadada" stroke-width="1" />
<line x1="1057.66" y1="230" x2="1057.66" y2="641" stroke="#dadada" stroke-width="1" />
<line x1="1128.015" y1="230" x2="1128.015" y2="641" stroke="#dadada" stroke-width="1" />
<rect x="220.5" y="229.5" width="2.0" height="254.0" fill="#222" />
<rect x="7" y="481.5" width="215.5" height="2.0" fill="#222" />
<text x="5.5" y="245.8" font-family="'Liberation Serif', serif" font-size="16" fill="#111" font-weight="normal" font-style="normal" text-anchor="start" textLength="32" lengthAdjust="spacingAndGlyphs" >Toán</text>
<text x="75" y="245.8" font-family="'Liberation Serif', serif" font-size="16" fill="#111" font-weight="normal" font-style="normal" text-anchor="start" textLength="144.5" lengthAdjust="spacingAndGlyphs" >Điểm Toán nhiều nhất</text>
<text x="69.8" y="266.974" font-family="'Liberation Serif', serif" font-size="16" fill="#111" font-weight="normal" font-style="normal" text-anchor="end" >3</text>
<text x="69.8" y="287.94599999999997" font-family="'Liberation Serif', serif" font-size="16" fill="#111" font-weight="normal" font-style="normal" text-anchor="end" >6</text>
<text x="69.8" y="308.918" font-family="'Liberation Serif', serif" font-size="16" fill="#111" font-weight="normal" font-style="normal" text-anchor="end" >7</text>
<text x="69.8" y="329.89" font-family="'Liberation Serif', serif" font-size="16" fill="#111" font-weight="normal" font-style="normal" text-anchor="end" >4</text>
<text x="69.8" y="350.86199999999997" font-family="'Liberation Serif', serif" font-size="16" fill="#111" font-weight="normal" font-style="normal" text-anchor="end" >5</text>
<text x="69.8" y="371.83399999999995" font-family="'Liberation Serif', serif" font-size="16" fill="#111" font-weight="normal" font-style="normal" text-anchor="end" >9</text>
<text x="69.8" y="392.806" font-family="'Liberation Serif', serif" font-size="16" fill="#111" font-weight="normal" font-style="normal" text-anchor="end" >6</text>
<text x="69.8" y="413.778" font-family="'Liberation Serif', serif" font-size="16" fill="#111" font-weight="normal" font-style="normal" text-anchor="end" >4</text>
<text x="69.8" y="434.75" font-family="'Liberation Serif', serif" font-size="16" fill="#111" font-weight="normal" font-style="normal" text-anchor="end" >3</text>
<text x="69.8" y="455.722" font-family="'Liberation Serif', serif" font-size="16" fill="#111" font-weight="normal" font-style="normal" text-anchor="end" >3</text>
<text x="69.8" y="476.69399999999996" font-family="'Liberation Serif', serif" font-size="16" fill="#111" font-weight="normal" font-style="normal" text-anchor="end" >6</text>
<text x="217" y="266.974" font-family="'Liberation Serif', serif" font-size="16" fill="#111" font-weight="normal" font-style="normal" text-anchor="end" >3</text>
<text x="217" y="329.89" font-family="'Liberation Serif', serif" font-size="16" fill="#111" font-weight="normal" font-style="normal" text-anchor="end" >3</text>
<text x="217" y="350.86199999999997" font-family="'Liberation Serif', serif" font-size="16" fill="#111" font-weight="normal" font-style="normal" text-anchor="end" >6</text>
<rect x="354.3" y="460.2" width="70.0" height="20.8" fill="none" stroke="#217346" stroke-width="2" />
<rect x="421.5" y="477.5" width="5.0" height="5.0" fill="#fff" />
<rect x="422" y="478" width="4" height="4" fill="#217346" />
<rect x="283" y="250" width="73.5" height="57" fill="#fff" stroke="#111" stroke-width="2" />
<path d="M308.5,251.5 L324.5,251.5 L330.5,257.5 L330.5,281 L308.5,281 Z" fill="#fafafa" stroke="#c8c8c8" stroke-width="1" />
<path d="M324.5,251.5 L324.5,257.5 L330.5,257.5" fill="#f0f0f0" stroke="#c8c8c8" stroke-width="1" />
<defs><linearGradient id="ig" x1="0" y1="0" x2="1" y2="1"><stop offset="0" stop-color="#2f6fd0"/><stop offset="1" stop-color="#5a3fb5"/></linearGradient></defs>
<rect x="312.5" y="260" width="13.5" height="13.5" rx="1.5" fill="url(#ig)"/>
<path d="M312.5,271 L318,265.5 L324,271.5 L324,273.5 L312.5,273.5 Z" fill="#3cc0f0" stroke="none" stroke-width="1" />
<path d="M316,273.5 L321,268.5 L326,273.5 Z" fill="#1e90e0" stroke="none" stroke-width="1" />
<circle cx="323" cy="263" r="1.3" fill="#cfe8ff"/>
<text x="291" y="296.8" font-family="'Liberation Sans', sans-serif" font-size="12" fill="#3a3a3a" font-weight="normal" font-style="normal" text-anchor="start" textLength="56" lengthAdjust="spacingAndGlyphs" >anhdep.jfif</text>
<path d="M281.8,334.6 L393.9,334.6 L393.9,308.3 L446,360.5 L393.9,412.8 L393.9,386.5 L281.8,386.5 Z" fill="#5b9bd5" stroke="#41719c" stroke-width="1" />
<ellipse cx="605.3" cy="362" rx="113.8" ry="47.2" fill="#5b9bd5" stroke="#41719c" stroke-width="1"/>
<rect x="1179" y="229.5" width="1" height="411.5" fill="#c6c6c6" />
<rect x="1181" y="229.5" width="1" height="411.5" fill="#dcdcdc" />
<rect x="1182" y="604.5" width="11" height="21.0" fill="#dadada" />
<path d="M1183.5,632 L1191.5,632 L1187.5,636.5 Z" fill="#777" stroke="none" stroke-width="1" />
<rect x="7" y="641" width="1186" height="1" fill="#c6c6c6" />
<rect x="7" y="641" width="34.5" height="22" fill="#fff" />
<rect x="41" y="641" width="1" height="22" fill="#c6c6c6" />
<text x="6.5" y="656.5" font-family="'Liberation Sans', sans-serif" font-size="13" fill="#217346" font-weight="bold" font-style="normal" text-anchor="start" textLength="26" lengthAdjust="spacingAndGlyphs" >eet1</text>
<rect x="7" y="660.5" width="34.5" height="1.5" fill="#217346" />
<text x="51" y="656.3" font-family="'Liberation Sans', sans-serif" font-size="12" fill="#505050" font-weight="normal" font-style="normal" text-anchor="start" textLength="40" lengthAdjust="spacingAndGlyphs" >Sheet2</text>
<line x1="101.5" y1="645" x2="101.5" y2="661" stroke="#bdbdbd" stroke-width="1" />
<circle cx="136" cy="653" r="5.8" fill="none" stroke="#6a6a6a" stroke-width="1.2"/>
<path d="M136,649.8 L136,656.2 M132.8,653 L139.2,653" fill="none" stroke="#777" stroke-width="1" />
<rect x="678.5" y="647.7" width="1.5" height="1.6" fill="#999" />
<rect x="678.5" y="651.7" width="1.5" height="1.6" fill="#999" />
<rect x="678.5" y="655.7" width="1.5" height="1.6" fill="#999" />
<rect x="691.5" y="644.5" width="16.5" height="16.0" fill="#fff" stroke="#c6c6c6" stroke-width="1" />
<path d="M702,649 L702,656 L698,652.5 Z" fill="#666" stroke="none" stroke-width="1" />
<rect x="708" y="644.5" width="428" height="16.0" fill="#fff" stroke="#c6c6c6" stroke-width="1" />
<rect x="1136.5" y="645" width="27.0" height="15" fill="#dcdcdc" />
<rect x="1163.5" y="644.5" width="16.0" height="16.0" fill="#fff" stroke="#d6d6d6" stroke-width="1" />
<path d="M1170,649 L1170,656 L1174,652.5 Z" fill="#666" stroke="none" stroke-width="1" />
<rect x="935.5" y="664.5" width="30.5" height="3.5" fill="#c8c8c8" />
<defs><filter id="msh" x="-5%" y="-5%" width="115%" height="115%"><feDropShadow dx="1" dy="1" stdDeviation="1.2" flood-color="#000" flood-opacity="0.18"/></filter></defs>
<rect x="1022.5" y="124.5" width="177.5" height="274.0" fill="#fff" stroke="#c6c6c6" stroke-width="1" filter="url(#msh)"/>
<text x="1051.7" y="142.7" font-family="'Liberation Sans', sans-serif" font-size="12" fill="#5c5c5c" font-weight="normal" font-style="normal" text-anchor="start" textLength="30.3" lengthAdjust="spacingAndGlyphs" >Find...</text>
<line x1="1051.7" y1="144.1" x2="1056.8" y2="144.1" stroke="#666" stroke-width="1" />
<text x="1051.7" y="167.0" font-family="'Liberation Sans', sans-serif" font-size="12" fill="#5c5c5c" font-weight="normal" font-style="normal" text-anchor="start" textLength="48.1" lengthAdjust="spacingAndGlyphs" >Replace...</text>
<line x1="1051.7" y1="168.4" x2="1058.4" y2="168.4" stroke="#666" stroke-width="1" />
<text x="1051.7" y="191.3" font-family="'Liberation Sans', sans-serif" font-size="12" fill="#5c5c5c" font-weight="normal" font-style="normal" text-anchor="start" textLength="39.2" lengthAdjust="spacingAndGlyphs" >Go To...</text>
<line x1="1051.7" y1="192.70000000000002" x2="1059.2" y2="192.70000000000002" stroke="#666" stroke-width="1" />
<text x="1051.7" y="215.3" font-family="'Liberation Sans', sans-serif" font-size="12" fill="#5c5c5c" font-weight="normal" font-style="normal" text-anchor="start" textLength="80.3" lengthAdjust="spacingAndGlyphs" >Go To Special...</text>
<line x1="1086.8" y1="216.70000000000002" x2="1096.6" y2="216.70000000000002" stroke="#666" stroke-width="1" />
<line x1="1054" y1="223.2" x2="1193" y2="223.2" stroke="#dcdcdc" stroke-width="1" />
<text x="1051.7" y="241.7" font-family="'Liberation Sans', sans-serif" font-size="12" fill="#5c5c5c" font-weight="normal" font-style="normal" text-anchor="start" textLength="48.5" lengthAdjust="spacingAndGlyphs" >Formulas</text>
<line x1="1079.8" y1="243.1" x2="1085.8" y2="243.1" stroke="#666" stroke-width="1" />
<text x="1051.7" y="266.6" font-family="'Liberation Sans', sans-serif" font-size="12" fill="#5c5c5c" font-weight="normal" font-style="normal" text-anchor="start" textLength="57.8" lengthAdjust="spacingAndGlyphs" >Comments</text>
<line x1="1066.3" y1="268.0" x2="1076.9" y2="268.0" stroke="#666" stroke-width="1" />
<text x="1051.7" y="290.9" font-family="'Liberation Sans', sans-serif" font-size="12" fill="#5c5c5c" font-weight="normal" font-style="normal" text-anchor="start" textLength="123.7" lengthAdjust="spacingAndGlyphs" >Conditional Formatting</text>
<line x1="1051.6" y1="292.29999999999995" x2="1058.2" y2="292.29999999999995" stroke="#666" stroke-width="1" />
<text x="1051.7" y="314.8" font-family="'Liberation Sans', sans-serif" font-size="12" fill="#5c5c5c" font-weight="normal" font-style="normal" text-anchor="start" textLength="52.3" lengthAdjust="spacingAndGlyphs" >Constants</text>
<line x1="1066.3" y1="316.2" x2="1072.8" y2="316.2" stroke="#666" stroke-width="1" />
<text x="1051.7" y="339.6" font-family="'Liberation Sans', sans-serif" font-size="12" fill="#5c5c5c" font-weight="normal" font-style="normal" text-anchor="start" textLength="78.2" lengthAdjust="spacingAndGlyphs" >Data Validation</text>
<line x1="1079.4" y1="341.0" x2="1086.7" y2="341.0" stroke="#666" stroke-width="1" />
<line x1="1053" y1="347.2" x2="1193" y2="347.2" stroke="#dcdcdc" stroke-width="1" />
<text x="1051.7" y="366.0" font-family="'Liberation Sans', sans-serif" font-size="12" fill="#5c5c5c" font-weight="normal" font-style="normal" text-anchor="start" textLength="74.3" lengthAdjust="spacingAndGlyphs" >Select Objects</text>
<line x1="1085.6" y1="367.4" x2="1095" y2="367.4" stroke="#666" stroke-width="1" />
<text x="1051.7" y="390.4" font-family="'Liberation Sans', sans-serif" font-size="12" fill="#5c5c5c" font-weight="normal" font-style="normal" text-anchor="start" textLength="85.5" lengthAdjust="spacingAndGlyphs" >Selection Pane...</text>
<line x1="1102.8" y1="391.79999999999995" x2="1108.9" y2="391.79999999999995" stroke="#666" stroke-width="1" />
<circle cx="1037" cy="136.5" r="3.8" fill="none" stroke="#3a78c0" stroke-width="1.7"/>
<path d="M1034.3,139.3 L1029.8,143.6" fill="none" stroke="#3a78c0" stroke-width="2" stroke-linecap="round"/>
<text x="1028.8" y="162.5" font-family="'Liberation Sans', sans-serif" font-size="9" fill="#7a4a9a" font-weight="normal" font-style="normal" text-anchor="start" textLength="9.5" lengthAdjust="spacingAndGlyphs" >ab</text>
<text x="1031.5" y="169.5" font-family="'Liberation Sans', sans-serif" font-size="9.5" fill="#555" font-weight="normal" font-style="normal" text-anchor="start" textLength="9.5" lengthAdjust="spacingAndGlyphs" >ac</text>
<path d="M1028.8,165 L1028.8,167 L1031.2,167 M1030,165.9 L1031.2,167 L1030,168.1" fill="none" stroke="#3a78c0" stroke-width="0.9" />
<path d="M1029.5,187 L1040.5,187 M1036,182.5 L1040.5,187 L1036,191.5" fill="none" stroke="#3a78c0" stroke-width="1.8" />
<path d="M1031.5,354.5 L1031.5,367 L1034.5,364 L1037,369 L1039,368 L1036.5,363 L1040.5,363 Z" fill="#fff" stroke="#777" stroke-width="0.9" />
<rect x="1027.5" y="377.5" width="6.5" height="6.5" fill="#fff" stroke="#999" stroke-width="0.9" />
<rect x="1027.5" y="386" width="6.5" height="6.5" fill="#fff" stroke="#999" stroke-width="0.9" />
<rect x="1032" y="380" width="6" height="4" fill="#e6b85c" />
<path d="M1037.5,381.5 L1037.5,391.5 L1039.8,389.3 L1041.5,393 L1043,392.3 L1041.3,388.8 L1044.3,388.8 Z" fill="#fff" stroke="#777" stroke-width="0.8" />
<rect x="1023.2" y="371.5" width="156.5" height="27.8" rx="2.5" fill="none" stroke="#ff0000" stroke-width="6.5"/>
<text x="960.6" y="415.5" font-family="'Liberation Sans', sans-serif" font-size="86" fill="#ff0000" font-weight="bold" font-style="normal" text-anchor="start" textLength="45.9" lengthAdjust="spacingAndGlyphs" stroke="#ff0000" stroke-width="2.5" stroke-linejoin="round">2</text>
<rect x="0" y="0" width="1200" height="7" fill="#000" />
<rect x="0" y="0" width="7" height="675" fill="#000" />
<rect x="1193" y="0" width="7" height="675" fill="#000" />
<rect x="0" y="668" width="1200" height="7" fill="#000" />
</svg>
</body></html>
